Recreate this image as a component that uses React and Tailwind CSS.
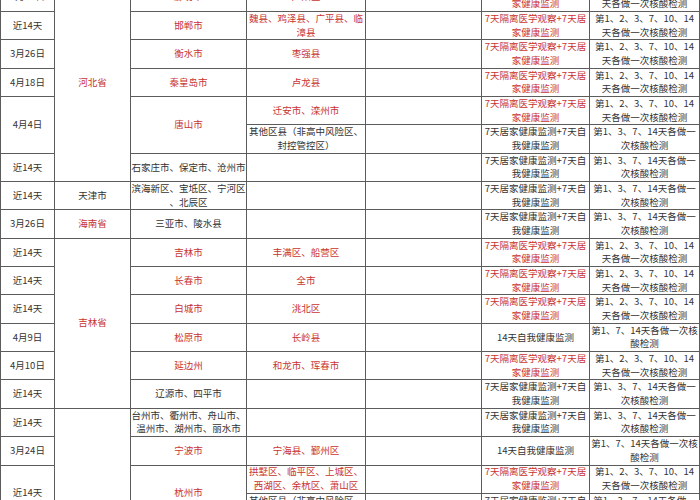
import React from "react";

const RED = "text-[#c9332f]";
const INK = "text-[#333]";

const Q7 = "7天隔离医学观察+7天居\n家健康监测";
const H7 = "7天居家健康监测+7天自\n我健康监测";
const S14 = "14天自我健康监测";
const TA = "第1、2、3、7、10、14\n天各做一次核酸检测";
const TB = "第1、3、7、14天各做一\n次核酸检测";
const TC = "第1、7、14天各做一次核\n酸检测";

// each cell: [text, red?, rowSpan]
const rows = [
  [["4月15日"], ["河北省", 1, 7], ["廊坊市", 1], ["广阳区", 1], [""], [Q7, 1], [TA]],
  [["近14天"], ["邯郸市", 1], ["魏县、鸡泽县、广平县、临\n漳县", 1], [""], [Q7, 1], [TA]],
  [["3月26日"], ["衡水市", 1], ["枣强县", 1], [""], [Q7, 1], [TA]],
  [["4月18日"], ["秦皇岛市", 1], ["卢龙县", 1], [""], [Q7, 1], [TA]],
  [["4月4日", 0, 2], ["唐山市", 1, 2], ["迁安市、滦州市", 1], [""], [Q7, 1], [TA]],
  [["其他区县（非高中风险区、\n封控管控区）"], [""], [H7], [TB]],
  [["近14天"], ["石家庄市、保定市、沧州市"], [""], [""], [H7], [TB]],
  [["近14天"], ["天津市"], ["滨海新区、宝坻区、宁河区\n、北辰区"], [""], [""], [H7], [TB]],
  [["3月26日"], ["海南省", 1], ["三亚市、陵水县"], [""], [""], [H7], [TB]],
  [["近14天"], ["吉林省", 1, 6], ["吉林市", 1], ["丰满区、船营区", 1], [""], [Q7, 1], [TA]],
  [["近14天"], ["长春市", 1], ["全市", 1], [""], [Q7, 1], [TA]],
  [["近14天"], ["白城市", 1], ["洮北区", 1], [""], [Q7, 1], [TA]],
  [["4月9日"], ["松原市", 1], ["长岭县", 1], [""], [S14], [TC]],
  [["4月10日"], ["延边州", 1], ["和龙市、珲春市", 1], [""], [Q7, 1], [TA]],
  [["近14天"], ["辽源市、四平市"], [""], [""], [H7], [TB]],
  [["近14天"], ["浙江省", 1, 7], ["台州市、衢州市、舟山市、\n温州市、湖州市、丽水市"], [""], [""], [H7], [TB]],
  [["3月24日"], ["宁波市", 1], ["宁海县、鄞州区", 1], [""], [S14], [TC]],
  [["近14天", 0, 2], ["杭州市", 1, 2], ["拱墅区、临平区、上城区、\n西湖区、余杭区、萧山区", 1], [""], [Q7, 1], [TA]],
  [["其他区县（非高中风险区、\n封控管控区）"], [""], [H7], [TB]],
  [["近14天"], ["绍兴市", 1], ["越城区", 1], [""], [Q7, 1], [TA]],
  [["近14天"], ["金华市", 1], ["义乌市", 1], [""], [Q7, 1], [TA]],
  [["近14天"], ["嘉兴市", 1], ["南湖区", 1], [""], [Q7, 1], [TA]],
];

const spanClass = { 1: "", 2: "row-span-2", 6: "row-span-6", 7: "row-span-7" };

function Cell({ text, red, span }) {
  return (
    <div
      className={`bg-white flex items-center justify-center text-center whitespace-pre overflow-hidden ${
        red ? RED : INK
      } ${spanClass[span || 1]}`}
    >
      {text}
    </div>
  );
}

export default function App() {
  return (
    <div className="w-[700px] h-[500px] overflow-hidden bg-white">
      <div className="-mt-[17.35px] bg-[#5c5c5c] p-px grid gap-px grid-cols-[53px_75px_115px_118px_115px_107px_109px] auto-rows-[27.35px] text-[9.5px] leading-[13.7px] font-['Noto_Sans_CJK_SC',sans-serif]">
        {rows.map((row, i) =>
          row.map((c, j) => (
            <Cell key={`${i}-${j}`} text={c[0]} red={c[1]} span={c[2]} />
          ))
        )}
      </div>
    </div>
  );
}
